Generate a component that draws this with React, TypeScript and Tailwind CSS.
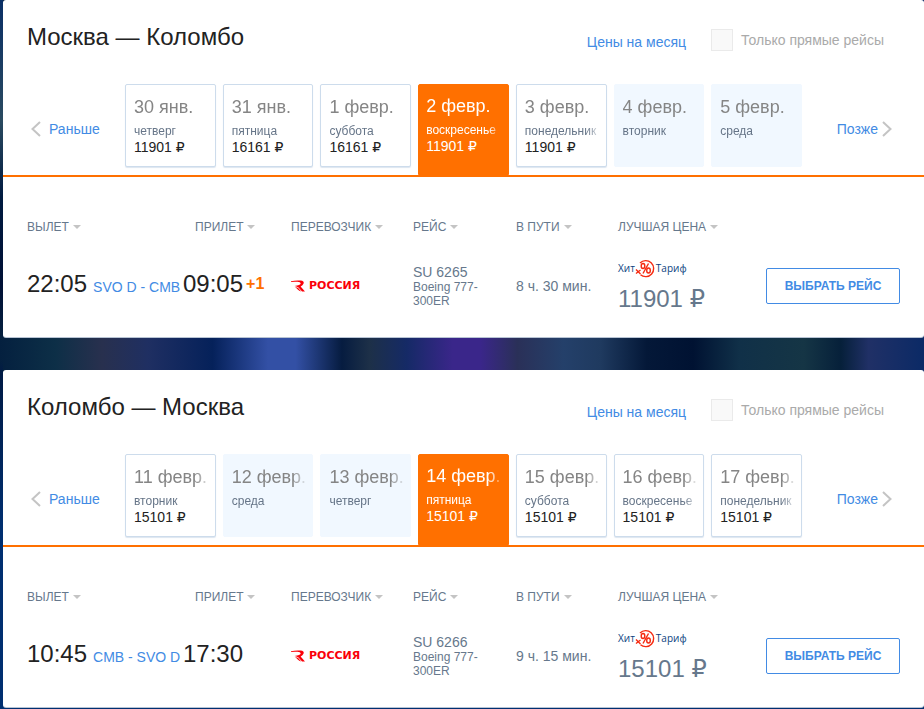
import React from "react";

type Day = { date: string; weekday: string; price?: string; selected?: boolean };

type Direction = {
  id: string;
  title: string;
  days: Day[];
  departure: string;
  route: string;
  arrival: string;
  plusDays?: string;
  flight: string;
  duration: string;
  price: string;
};

const directions: Direction[] = [
  {
    id: "outbound",
    title: "Москва — Коломбо",
    days: [
      { date: "30 янв.", weekday: "четверг", price: "11901" },
      { date: "31 янв.", weekday: "пятница", price: "16161" },
      { date: "1 февр.", weekday: "суббота", price: "16161" },
      { date: "2 февр.", weekday: "воскресенье", price: "11901", selected: true },
      { date: "3 февр.", weekday: "понедельник", price: "11901" },
      { date: "4 февр.", weekday: "вторник" },
      { date: "5 февр.", weekday: "среда" },
    ],
    departure: "22:05",
    route: "SVO D - CMB",
    arrival: "09:05",
    plusDays: "+1",
    flight: "SU 6265",
    duration: "8 ч. 30 мин.",
    price: "11901",
  },
  {
    id: "inbound",
    title: "Коломбо — Москва",
    days: [
      { date: "11 февр.", weekday: "вторник", price: "15101" },
      { date: "12 февр.", weekday: "среда" },
      { date: "13 февр.", weekday: "четверг" },
      { date: "14 февр.", weekday: "пятница", price: "15101", selected: true },
      { date: "15 февр.", weekday: "суббота", price: "15101" },
      { date: "16 февр.", weekday: "воскресенье", price: "15101" },
      { date: "17 февр.", weekday: "понедельник", price: "15101" },
    ],
    departure: "10:45",
    route: "CMB - SVO D",
    arrival: "17:30",
    flight: "SU 6266",
    duration: "9 ч. 15 мин.",
    price: "15101",
  },
];

function Chevron({ flip = false }: { flip?: boolean }) {
  return (
    <svg width="10" height="16" viewBox="0 0 10 16" fill="none" stroke="#c4c4c4" strokeWidth="2" aria-hidden="true">
      <path d={flip ? "M1 1 L8.500 8 L1 15" : "M9 1 L1.500 8 L9 15"} />
    </svg>
  );
}

function Ruble() {
  return <span className="font-['DejaVu_Sans',sans-serif]">₽</span>;
}

function DayTile({ day }: { day: Day }) {
  const look = day.selected
    ? "h-[91px] border-[#ff7000] bg-[#ff7000] pl-[7px] pt-[9px] text-white"
    : day.price
      ? "h-[83px] rounded-b-[2px] border-[#cddcec] bg-white pl-2 pt-[10px] text-[#222] shadow-[0_1px_1px_#dde6f0]"
      : "h-[83px] rounded-b-[2px] border-[#f1f8ff] bg-[#f1f8ff] pl-2 pt-[10px] text-[#222]";
  return (
    <button
      type="button"
      aria-pressed={Boolean(day.selected)}
      className={`flex min-w-0 flex-col rounded-t-[2px] border pr-1 text-left ${look}`}
    >
      <span className="w-full whitespace-nowrap mask-r-from-80% mask-r-to-100%">
        <span className={`block text-[18px] leading-[24px] ${day.selected ? "text-white" : "text-[#858585]"}`}>{day.date}</span>
        <span className={`block text-[12px] leading-[24px] ${day.selected ? "text-white" : "text-[#667588]"}`}>{day.weekday}</span>
      </span>
      {day.price && (
        <span className="-mt-1 text-[14px] leading-[16px]">
          {day.price} <Ruble />
        </span>
      )}
    </button>
  );
}

function SortHeader({ label, indent = false }: { label: string; indent?: boolean }) {
  return (
    <th scope="col" className={`p-0 text-left font-normal ${indent ? "pl-3" : ""}`}>
      <button type="button" className="flex items-center gap-1 whitespace-nowrap text-[12px] leading-[16px] text-[#66788c]">
        {label}
        <svg width="8" height="4" viewBox="0 0 8 4" fill="#c4c4c4" aria-hidden="true">
          <path d="M0 0 H8 L4 4 Z" />
        </svg>
      </button>
    </th>
  );
}

function RossiyaLogo() {
  return (
    <div className="flex items-center gap-1 text-[#fa0008]">
      <svg width="14" height="12" viewBox="0 0 14 12" fill="currentColor" aria-hidden="true">
        <path d="M0 1.200 Q5 0.200 9.500 0.600 Q13.500 1 12.600 3.600 Q11.800 5.800 9.600 6.400 L14 11.500 H11 L7.500 7.500 Q5.500 6.200 3.500 6 Q9.500 5.500 9.700 3.300 Q9.500 2 6.500 1.800 Q3 1.500 0 2 Z" />
        <path d="M4 7.200 Q6.500 7.200 7.600 8.600 L10.200 11.500 Q8 11 7 9.800 Q5.500 8 4 7.200 Z" />
      </svg>
      <span className="whitespace-nowrap font-['DejaVu_Sans',sans-serif] text-[11px] font-bold leading-[12px]">РОССИЯ</span>
    </div>
  );
}

function HitFare() {
  return (
    <div className="flex h-5 font-['Open_Sans',sans-serif] text-[10px] leading-[18px] text-[#0b3f80]">
      Хит
      <svg className="mr-px" width="20" height="20" viewBox="0 0 20 20" fill="none" stroke="#f52a10" aria-hidden="true">
        <path d="M5 4 A8 8 0 1 1 5.500 15.800" strokeWidth="1.400" />
        <path d="M1 10.500 L5.500 15 M1 14.500 L5.500 11" strokeWidth="1.400" />
        <ellipse cx="8" cy="7" rx="1.800" ry="2.500" strokeWidth="1.400" />
        <ellipse cx="13.500" cy="11.500" rx="1.800" ry="2.500" strokeWidth="1.400" />
        <path d="M13.500 4.500 L8 14.500" strokeWidth="1.400" />
      </svg>
      Тариф
    </div>
  );
}

function DirectionCard({ data }: { data: Direction }) {
  return (
    <section className="rounded-[3px] bg-white shadow-[0_1px_0_#b8c4d4]">
      <header className="flex h-[84px] items-start justify-between pl-6 pr-10">
        <h2 className="pt-[22px] text-[24px] leading-[30px] text-[#222]">{data.title}</h2>
        <div className="flex items-center gap-[25px] pt-[29px] text-[14px]">
          <a href="#month" className="pt-1 leading-[18px] text-[#428be4]">Цены на месяц</a>
          <label className="flex items-center gap-2 leading-[22px] text-[#aaa]">
            <input type="checkbox" className="size-[22px] appearance-none border border-[#eaeaea] bg-[#f9f9f9]" />
            Только прямые рейсы
          </label>
        </div>
      </header>

      <div className="flex items-start border-b-2 border-[#ff7000]">
        <button type="button" className="mt-9 flex w-[122px] shrink-0 items-center gap-2 pl-7 text-[14px] leading-[18px] text-[#428be4]">
          <Chevron />
          Раньше
        </button>
        <div className="grid flex-1 grid-cols-7 items-start gap-[7px]">
          {data.days.map((day) => (
            <DayTile key={day.date} day={day} />
          ))}
        </div>
        <button type="button" className="mt-9 flex w-[122px] shrink-0 items-center justify-end gap-1 pr-8 text-[14px] leading-[18px] text-[#428be4]">
          Позже
          <Chevron flip />
        </button>
      </div>

      <div className="pl-6 pr-6 pt-[42px]">
        <table className="w-full table-fixed border-collapse">
          <colgroup>
            <col className="w-[156px]" />
            <col className="w-[108px]" />
            <col className="w-[122px]" />
            <col className="w-[103px]" />
            <col className="w-[102px]" />
            <col />
            <col className="w-[134px]" />
          </colgroup>
          <thead>
            <tr>
              <SortHeader label="ВЫЛЕТ" />
              <SortHeader label="ПРИЛЕТ" indent />
              <SortHeader label="ПЕРЕВОЗЧИК" />
              <SortHeader label="РЕЙС" />
              <SortHeader label="В ПУТИ" />
              <SortHeader label="ЛУЧШАЯ ЦЕНА" />
              <td />
            </tr>
          </thead>
          <tbody className="text-[#66788c]">
            <tr className="h-[102px]">
              <td className="whitespace-nowrap p-0 pb-1">
                <span className="text-[24px] leading-[28px] text-[#222]">{data.departure}</span>
                <a href="#airports" className="ml-[6px] text-[14px] text-[#428be4]">{data.route}</a>
              </td>
              <td className="whitespace-nowrap p-0 pb-1 text-[24px] leading-[28px] text-[#222]">
                {data.arrival}
                {data.plusDays && <sup className="-top-[3px] ml-[3px] align-baseline text-[16px] font-bold leading-[16px] text-[#ff7000]">{data.plusDays}</sup>}
              </td>
              <td className="p-0"><RossiyaLogo /></td>
              <td className="p-0 text-[12px] leading-[14px]">
                <div className="text-[14px] leading-[16px]">{data.flight}</div>
                <div className="w-[70px]">Boeing 777-300ER</div>
              </td>
              <td className="whitespace-nowrap p-0 text-[14px]">{data.duration}</td>
              <td className="p-0">
                <HitFare />
                <div className="mt-[5px] text-[24px] leading-[30px]">
                  {data.price} <Ruble />
                </div>
              </td>
              <td className="p-0">
                <button type="button" className="h-9 w-full whitespace-nowrap rounded-[2px] border border-[#428be4] bg-white text-[12px] font-bold text-[#428be4]">
                  ВЫБРАТЬ РЕЙС
                </button>
              </td>
            </tr>
          </tbody>
        </table>
      </div>
    </section>
  );
}

export default function App() {
  return (
    <main className="min-h-screen bg-[linear-gradient(180deg,transparent_60%,#002f70_85%),linear-gradient(90deg,#04203f_0%,#0d2f47_6%,#28304e_11%,#1f2f62_16%,#05215a_23%,#3350a5_29%,#3350a5_32%,#061c40_37%,#1d3048_40%,#152a66_44%,#3a268a_49%,#3a268a_52%,#2a3058_56%,#24406a_61%,#1f3a5f_65%,#041838_70%,#001232_75%,#103048_80%,#153545_87%,#06203a_91%,#203066_94%,#0b2a66_100%)] font-['Liberation_Sans',Arial,sans-serif]">
      <div className="flex flex-col gap-[33px] bg-[linear-gradient(180deg,#0a2f66_0%,#2a4a60_17%,#001a40_28%,#001035_40%,transparent_48%,transparent_51%,#001a45_53%,#002f70_75%)] bg-[length:3px_100%] bg-no-repeat pl-[3px]">
        {directions.map((d) => (
          <DirectionCard key={d.id} data={d} />
        ))}
      </div>
    </main>
  );
}
